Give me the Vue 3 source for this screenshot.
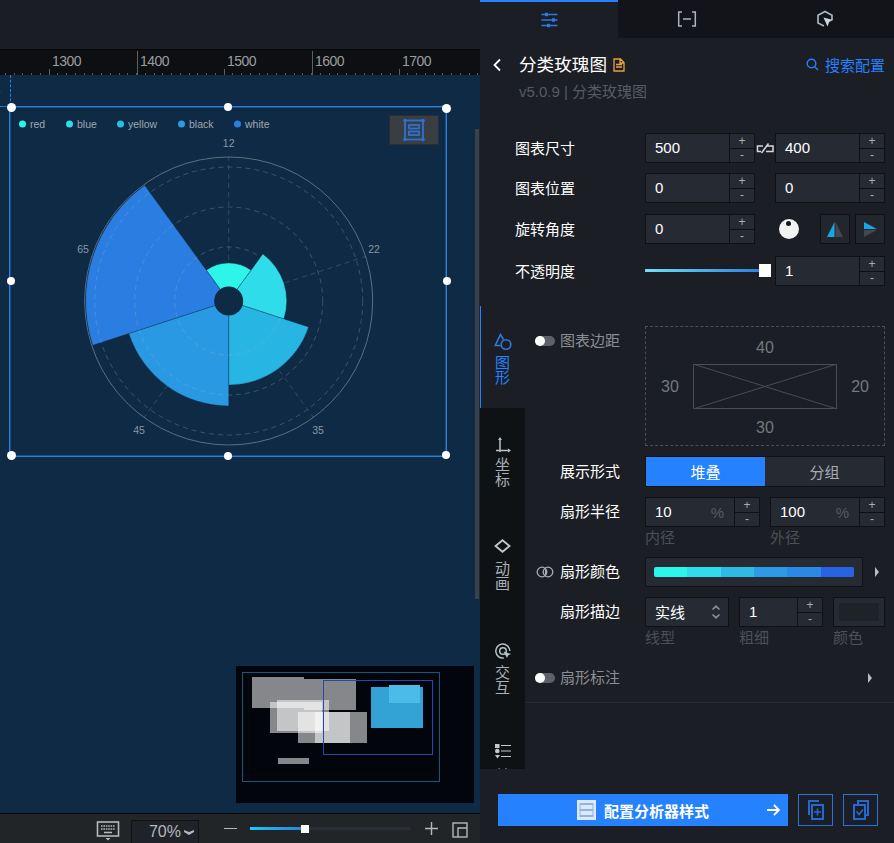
<script setup>
import { computed } from "vue";

const rulerLabels = [
	{ text: "1300", x: 49, tall: false },
	{ text: "1400", x: 137, tall: true },
	{ text: "1500", x: 224, tall: false },
	{ text: "1600", x: 312, tall: true },
	{ text: "1700", x: 399, tall: false }
];

// 小刻度，每 10 个单位一格
const minorTicks = computed(() => {
	const list = [];
	for (let x = -4; x < 480; x += 8.75) list.push(Math.round(x));
	return list;
});

const legend = [
	{ name: "red", color: "#2df5ea", x: 22 },
	{ name: "blue", color: "#2fdcea", x: 69 },
	{ name: "yellow", color: "#2dbbe6", x: 120 },
	{ name: "black", color: "#2c9ae4", x: 181 },
	{ name: "white", color: "#2a7de1", x: 237 }
];

const cx = 219.7;
const cy = 195;

const polar = (r, deg) => {
	const a = ((deg - 90) * Math.PI) / 180;
	return [cx + r * Math.cos(a), cy + r * Math.sin(a)];
};

// 玫瑰图扇区
const sectors = computed(() => {
	const data = [
		{ r: 38, color: "#2df5ea", start: -36 },
		{ r: 58, color: "#2fdcea", start: 36 },
		{ r: 84, color: "#27b5e3", start: 108 },
		{ r: 105, color: "#2a99e3", start: 180 },
		{ r: 143, color: "#2a7de1", start: 252 }
	];
	return data.map(item => {
		const [x1, y1] = polar(item.r, item.start);
		const [x2, y2] = polar(item.r, item.start + 72);
		return {
			color: item.color,
			d: `M${cx} ${cy}L${x1} ${y1}A${item.r} ${item.r} 0 0 1 ${x2} ${y2}Z`
		};
	});
});

const spokes = computed(() =>
	[0, 72, 144, 216, 288].map(deg => {
		const [x1, y1] = polar(14, deg);
		const [x2, y2] = polar(144, deg);
		return { x1, y1, x2, y2 };
	})
);

const chartLabels = [
	{ text: "12", x: 219.7, y: 41 },
	{ text: "22", x: 365, y: 147 },
	{ text: "35", x: 309, y: 328 },
	{ text: "45", x: 130, y: 328 },
	{ text: "65", x: 74, y: 147 }
];

const handles = [
	{ x: 1, y: 0, r: 9 },
	{ x: 218, y: 0, r: 8 },
	{ x: 436, y: 1, r: 9 },
	{ x: 1, y: 174, r: 8 },
	{ x: 437, y: 174, r: 8 },
	{ x: 1, y: 348, r: 9 },
	{ x: 218, y: 349, r: 8 },
	{ x: 436, y: 348, r: 8 }
];

const miniRects = [
	{ x: 16, y: 11, w: 52, h: 31 },
	{ x: 68, y: 13, w: 52, h: 31 },
	{ x: 34, y: 36, w: 52, h: 31 },
	{ x: 41, y: 34, w: 52, h: 31 },
	{ x: 62, y: 46, w: 52, h: 31 },
	{ x: 79, y: 46, w: 52, h: 31 },
	{ x: 42, y: 92, w: 31, h: 6 }
];
</script>

<template>
	<div class="page">
		<!-- 画布区域 -->
		<div class="stage">
			<div class="top-bar"></div>
			<div class="ruler">
				<span v-for="x in minorTicks" :key="x" class="tick" :style="{ left: x + 'px' }"></span>
				<template v-for="item in rulerLabels" :key="item.text">
					<span class="tick-major" :class="{ tall: item.tall }" :style="{ left: item.x + 'px' }"></span>
					<span class="ruler-label" :style="{ left: item.x + 3 + 'px' }">{{ item.text }}</span>
				</template>
			</div>
			<div class="canvas">
				<span class="guide-v"></span>
				<span class="guide-h"></span>
				<span class="guide-num">4</span>
				<span class="scrollbar"></span>

				<div class="node">
					<svg class="chart" width="438" height="352" viewBox="0 0 438 352">
						<g v-for="item in legend" :key="item.name">
							<circle :cx="item.x - 8.5" cy="18" r="3.5" :fill="item.color" />
							<text :x="item.x - 1" y="22" class="legend-text">{{ item.name }}</text>
						</g>
						<circle :cx="cx" :cy="cy" r="144" fill="none" stroke="#5b6f80" stroke-width="1" />
						<g stroke="#9fb4c4" stroke-opacity="0.24" stroke-width="1" stroke-dasharray="5 4">
							<line v-for="(s, i) in spokes" :key="i" :x1="s.x1" :y1="s.y1" :x2="s.x2" :y2="s.y2" />
						</g>
						<path v-for="item in sectors" :key="item.color" :d="item.d" :fill="item.color" stroke="#0e2a44" stroke-opacity="0.55" stroke-width="0.6" />
						<g fill="none" stroke="#9fb4c4" stroke-opacity="0.3" stroke-width="1" stroke-dasharray="5 4">
							<circle :cx="cx" :cy="cy" r="134" />
							<circle :cx="cx" :cy="cy" r="94" />
							<circle :cx="cx" :cy="cy" r="54" />
						</g>
						<circle :cx="cx" :cy="cy" r="14.5" fill="#0e2a44" />
						<text v-for="item in chartLabels" :key="item.text" :x="item.x" :y="item.y" class="chart-label">{{ item.text }}</text>
					</svg>
					<span v-for="(h, i) in handles" :key="i" class="handle" :style="{ left: h.x - h.r / 2 + 'px', top: h.y - h.r / 2 + 'px', width: h.r + 'px', height: h.r + 'px' }"></span>
					<div class="node-btn">
						<svg width="24" height="24" viewBox="0 0 24 24" fill="none" stroke="#2a72d8" stroke-width="1.8">
							<rect x="3" y="2.5" width="18" height="19" />
							<rect x="7" y="7" width="10" height="3.5" />
							<rect x="7" y="13.5" width="10" height="3.5" />
							<g fill="#2a72d8" stroke="none">
								<circle cx="3" cy="2.5" r="1.8" />
								<circle cx="21" cy="2.5" r="1.8" />
								<circle cx="3" cy="21.5" r="1.8" />
								<circle cx="21" cy="21.5" r="1.8" />
							</g>
						</svg>
					</div>
				</div>

				<!-- 缩略图 -->
				<div class="minimap">
					<span class="mini-frame"></span>
					<span v-for="(r, i) in miniRects" :key="i" class="mini-rect" :style="{ left: r.x + 'px', top: r.y + 'px', width: r.w + 'px', height: r.h + 'px' }"></span>
					<span class="mini-blue"></span>
					<span class="mini-blue light"></span>
					<span class="mini-view"></span>
				</div>
			</div>
			<div class="bottom-bar">
				<svg class="kbd" width="24" height="20" viewBox="0 0 24 20" fill="none" stroke="#b4b8bc">
					<rect x="1.5" y="1" width="21" height="14" stroke-width="1.6" />
					<path d="M5 5h14M5 8h14" stroke-width="1.6" stroke-dasharray="1.6 .8" />
					<path d="M8 11.500h8" stroke-width="1.6" />
					<path d="M9.500 17h5l-2.500 2.500z" fill="#b4b8bc" stroke="none" />
				</svg>
				<div class="zoom-box">70%<svg width="10" height="6" viewBox="0 0 10 6"><path d="M0 1l5 2 5-2v2L5 6 0 3z" fill="#b4b8bc" /></svg></div>
				<span class="zoom-minus"></span>
				<div class="zoom-track">
					<span class="zoom-fill"></span>
					<span class="zoom-thumb"></span>
				</div>
				<svg class="zoom-plus" width="13" height="13" viewBox="0 0 13 13"><path d="M0 6.500h13M6.500 0v13" stroke="#b4b8bc" stroke-width="1.4" /></svg>
				<svg class="fit" width="16" height="16" viewBox="0 0 16 16" fill="none" stroke="#b4b8bc" stroke-width="1.4"><rect x="1" y="1" width="14" height="14" /><path d="M15 6H6v9" /></svg>
			</div>
		</div>

		<!-- 右侧配置面板 -->
		<div class="panel">
			<div class="panel-tabs">
				<div class="panel-tab active">
					<svg width="17" height="16" viewBox="0 0 17 16" stroke="#2a7be0" stroke-width="1.500" fill="#2a7be0">
						<path d="M.5 2.500h16M.5 8h16M.5 13.500h16" fill="none" />
						<rect x="4" y=".8" width="3" height="3.400" stroke="none" />
						<rect x="11" y="6.300" width="3" height="3.400" stroke="none" />
						<rect x="6" y="11.800" width="3" height="3.400" stroke="none" />
					</svg>
				</div>
				<div class="panel-tab">
					<svg width="20" height="16" viewBox="0 0 20 16" fill="none" stroke="#a9b4bb" stroke-width="1.500">
						<path d="M5 1H1.700v14H5M15 1h3.300v14H15M6 8h8" />
					</svg>
				</div>
				<div class="panel-tab">
					<svg width="18" height="18" viewBox="0 0 18 18" fill="none" stroke="#a9b4bb" stroke-width="1.700">
						<path d="M8 16l-6-3V5.200L9 1.500l7 3.700V10" />
						<path d="M7.500 7.500l9.500 2.500-3.800 2-1.700 4.500z" fill="#c8d6e2" stroke="none" />
					</svg>
				</div>
			</div>

			<div class="head">
				<svg class="back" width="10" height="14" viewBox="0 0 10 14" fill="none" stroke="#fff" stroke-width="1.800"><path d="M8 1.500L2.500 7 8 12.500" /></svg>
				<div class="head-main">
					<div class="title-line">
						<span class="title">分类玫瑰图</span>
						<svg width="12" height="14" viewBox="0 0 12 14" fill="none" stroke="#e8a33a" stroke-width="1.300"><path d="M1 1h6.500L11 4.500V13H1zM3 6.500h6M3 9h6M7 1v4h4" /></svg>
					</div>
					<div class="version">v5.0.9 | 分类玫瑰图</div>
				</div>
				<div class="search">
					<svg width="13" height="13" viewBox="0 0 13 13" fill="none" stroke="#2681ff" stroke-width="1.400"><circle cx="5.500" cy="5.500" r="4.300" /><path d="M8.700 8.700L12 12" /></svg>
					搜索配置
				</div>
			</div>

			<div class="base">
				<div class="row">
					<label class="lab">图表尺寸</label>
					<div class="num w110"><span class="val">500</span><div class="steps"><i>+</i><i>-</i></div></div>
					<svg class="link" width="20" height="11" viewBox="0 0 20 11" fill="none" stroke="#d5d8da" stroke-width="1.500"><path d="M8 3H2.500v5.500h3.500M12 3h6v5.500h-7M6.500 10l7-9.500" /></svg>
					<div class="num w110"><span class="val">400</span><div class="steps"><i>+</i><i>-</i></div></div>
				</div>
				<div class="row">
					<label class="lab">图表位置</label>
					<div class="num w110"><span class="val">0</span><div class="steps"><i>+</i><i>-</i></div></div>
					<span class="spacer"></span>
					<div class="num w110"><span class="val">0</span><div class="steps"><i>+</i><i>-</i></div></div>
				</div>
				<div class="row rot">
					<label class="lab">旋转角度</label>
					<div class="num w110"><span class="val">0</span><div class="steps"><i>+</i><i>-</i></div></div>
					<span class="dial"><span></span></span>
					<div class="flip">
						<svg width="16" height="15" viewBox="0 0 16 15"><path d="M7.500 0v15H0z" fill="#14a6e6" /><path d="M8.500 0v15H16z" fill="#44484d" /></svg>
					</div>
					<div class="flip">
						<svg width="13" height="15" viewBox="0 0 13 15"><path d="M0 0l13 7H0z" fill="#14a6e6" /><path d="M0 8h13L0 15z" fill="#44484d" /></svg>
					</div>
				</div>
				<div class="row opa">
					<label class="lab">不透明度</label>
					<div class="slider"><span class="slider-fill"></span><span class="slider-thumb"></span></div>
					<div class="num w110"><span class="val">1</span><div class="steps"><i>+</i><i>-</i></div></div>
				</div>
			</div>

			<div class="section">
				<div class="side">
					<div class="side-tab active">
						<svg width="18" height="18" viewBox="0 0 18 18" fill="none" stroke="#2a7be0" stroke-width="1.600"><path d="M9.500 6.500L6.500 1.500 1.300 12.500H6.500" /><circle cx="12" cy="11.500" r="4.800" /></svg>
						<span class="side-text">图形</span>
					</div>
					<div class="side-tab t2">
						<svg width="16" height="16" viewBox="0 0 16 16" fill="none" stroke="#b7c2c7" stroke-width="1.500"><path d="M5 1.500V15M1 13.500h13.500" /><path d="M5 0L3 3h4zM16 13.500L13 11.500v4z" fill="#b7c2c7" stroke="none" /></svg>
						<span class="side-text">坐标</span>
					</div>
					<div class="side-tab t3">
						<svg width="17" height="14" viewBox="0 0 17 14" fill="none" stroke="#c4c8cb" stroke-width="1.800"><path d="M8.500 1.200L15.500 7 8.500 12.800 1.500 7z" /></svg>
						<span class="side-text">动画</span>
					</div>
					<div class="side-tab t4">
						<svg width="16" height="16" viewBox="0 0 16 16" fill="none" stroke="#b7c2c7" stroke-width="1.500"><path d="M14.800 8a7 7 0 1 0-6 7" /><circle cx="8" cy="8" r="3.300" /><path d="M8.500 8.500L16 11l-2.800 1.200L12 15z" fill="#b7c2c7" stroke="none" /></svg>
						<span class="side-text">交互</span>
					</div>
					<div class="side-tab t5">
						<svg width="16" height="16" viewBox="0 0 16 16" fill="#c4c8cb"><rect x="0" y="1" width="4.500" height="4" /><circle cx="2.300" cy="8" r="2.300" /><path d="M0 12h5l-2.500 3.500z" /><path d="M6 2.500h10M6 8h10M6 13.500h10" stroke="#c4c8cb" stroke-width="1.200" /></svg>
						<span class="side-text">其他</span>
					</div>
				</div>

				<div class="form">
					<div class="frow margin-row">
						<span class="toggle"></span>
						<label class="flab dim">图表边距</label>
						<div class="margin-box">
							<span class="m-top">40</span>
							<div class="m-mid">
								<span>30</span>
								<svg width="144" height="45" viewBox="0 0 144 45" fill="none" stroke="#4a4d52"><rect x="0.500" y="0.500" width="143" height="44" /><path d="M0 0l144 45M144 0L0 45" /></svg>
								<span>20</span>
							</div>
							<span class="m-bot">30</span>
						</div>
					</div>
					<div class="frow show-row">
						<span class="lead"></span>
						<label class="flab">展示形式</label>
						<div class="seg">
							<span class="on">堆叠</span>
							<span>分组</span>
						</div>
					</div>
					<div class="frow radius-row">
						<span class="lead"></span>
						<label class="flab">扇形半径</label>
						<div class="num w115"><span class="val">10</span><em>%</em><div class="steps"><i>+</i><i>-</i></div></div>
						<div class="num w115 gap10"><span class="val">100</span><em>%</em><div class="steps"><i>+</i><i>-</i></div></div>
					</div>
					<div class="hints h1"><span class="hint w125">内径</span><span class="hint">外径</span></div>
					<div class="frow color-row">
						<svg class="lead-ic" width="18" height="12" viewBox="0 0 18 12" fill="none" stroke="#a9adb1" stroke-width="1.300"><circle cx="6" cy="6" r="4.800" /><circle cx="12" cy="6" r="4.800" /><path d="M9 2.500a4.800 4.800 0 0 1 0 7z" fill="#a9adb1" stroke="none" /></svg>
						<label class="flab">扇形颜色</label>
						<div class="color-field"><div class="color-bar"></div></div>
						<svg class="arrow" width="6" height="10" viewBox="0 0 6 10"><path d="M1 0l4 5-4 5z" fill="#b9bdc0" /></svg>
					</div>
					<div class="frow stroke-row">
						<span class="lead"></span>
						<label class="flab">扇形描边</label>
						<div class="num select"><span class="val cn">实线</span>
							<svg width="10" height="16" viewBox="0 0 10 16"><path d="M5 1l4 4-1 1-3-2.500L2 6 1 5zM5 15l4-4-1-1-3 2.500L2 10l-1 1z" fill="#8c9095" /></svg>
						</div>
						<div class="num w84"><span class="val">1</span><div class="steps"><i>+</i><i>-</i></div></div>
						<div class="swatch"><span></span></div>
					</div>
					<div class="hints h2"><span class="hint w94">线型</span><span class="hint w94">粗细</span><span class="hint">颜色</span></div>
					<div class="frow note-row">
						<span class="toggle"></span>
						<label class="flab dim">扇形标注</label>
						<svg class="arrow push" width="6" height="10" viewBox="0 0 6 10"><path d="M1 0l4 5-4 5z" fill="#b9bdc0" /></svg>
					</div>
					<div class="divider"></div>
				</div>
			</div>

			<div class="foot">
				<div class="main-btn">
					<svg width="19" height="20" viewBox="0 0 19 20"><rect width="19" height="20" fill="#dfe9f5" /><rect x="2.500" y="3" width="14" height="14" fill="#8db4e8" /><rect x="3.500" y="5" width="12" height="4" fill="#dfe9f5" /><rect x="3.500" y="11" width="12" height="4" fill="#dfe9f5" /></svg>
					<span>配置分析器样式</span>
					<svg class="go" width="13" height="12" viewBox="0 0 13 12" fill="none" stroke="#fff" stroke-width="1.800"><path d="M0 6h11.500M7 1l5 5-5 5" /></svg>
				</div>
				<div class="icon-btn">
					<svg width="16" height="20" viewBox="0 0 16 20" fill="none" stroke="#2568d0" stroke-width="2"><path d="M11 1H1v14" /><rect x="4" y="5" width="11" height="14" /><path d="M9.500 8.500v7M6 12h7" stroke-width="1.600" /></svg>
				</div>
				<div class="icon-btn">
					<svg width="16" height="20" viewBox="0 0 16 20" fill="none" stroke="#2568d0" stroke-width="2"><path d="M5 4V1h10v14h-3" /><rect x="1" y="5" width="11" height="14" /><path d="M3.500 11.500l2.500 3 4-5" stroke-width="1.600" /></svg>
				</div>
			</div>
		</div>
	</div>
</template>

<style>
	html,
	body {
		margin: 0;
		background: #1b1e25;
	}
</style>

<style scoped>
	.page {
		display: flex;
		width: 894px;
		height: 843px;
		overflow: hidden;
		font-family: "Liberation Sans", "Noto Sans CJK SC", sans-serif;
		color: #fff;
	}

	/* 画布 */
	.stage {
		display: flex;
		flex-direction: column;
		width: 480px;
		flex: none;
	}
	.top-bar {
		height: 49px;
		background: #1a1d23;
		border-bottom: 1px solid #050607;
	}
	.ruler {
		position: relative;
		height: 25px;
		background: #0e0f12;
		overflow: hidden;
	}
	.tick {
		position: absolute;
		bottom: 0;
		width: 1px;
		height: 2px;
		background: #55585c;
	}
	.tick-major {
		position: absolute;
		bottom: 0;
		width: 1px;
		height: 6px;
		background: #5c5f63;
	}
	.tick-major.tall {
		height: 24px;
	}
	.ruler-label {
		position: absolute;
		top: 3px;
		font-size: 14px;
		letter-spacing: -0.5px;
		color: #9a9da0;
	}
	.canvas {
		position: relative;
		height: 738px;
		background: #0e2a44;
		overflow: hidden;
	}
	.guide-v {
		position: absolute;
		left: 10px;
		top: 0;
		height: 31px;
		border-left: 1px dashed #2a7de1;
	}
	.guide-h {
		position: absolute;
		left: 0;
		top: 31px;
		width: 10px;
		border-top: 1px dashed #2a7de1;
	}
	.guide-num {
		position: absolute;
		left: -6px;
		top: 8px;
		font-size: 12px;
		color: #2a6fc0;
	}
	.scrollbar {
		position: absolute;
		left: 475px;
		top: 54px;
		width: 4px;
		height: 470px;
		background: #3c4148;
	}
	.node {
		position: absolute;
		left: 9px;
		top: 31px;
		width: 438px;
		height: 351px;
		border: 1px solid #2a7de1;
		box-sizing: border-box;
		outline: 1px solid rgba(42, 125, 225, 0.45);
		outline-offset: -2px;
	}
	.chart {
		position: absolute;
		left: -1px;
		top: -1px;
	}
	.legend-text {
		font-size: 10.5px;
		fill: #9fa9b3;
	}
	.chart-label {
		font-size: 10.5px;
		fill: #8b97a2;
		text-anchor: middle;
	}
	.handle {
		position: absolute;
		background: #fff;
		border-radius: 50%;
	}
	.node-btn {
		position: absolute;
		left: 379px;
		top: 8px;
		width: 50px;
		height: 30px;
		display: flex;
		align-items: center;
		justify-content: center;
		background: #3a3d42;
		border: 1px solid #2a2d30;
		box-sizing: border-box;
	}

	/* 缩略图 */
	.minimap {
		position: absolute;
		left: 236px;
		top: 591px;
		width: 238px;
		height: 137px;
		background: #02060c;
	}
	.mini-frame {
		position: absolute;
		left: 6px;
		top: 6px;
		width: 198px;
		height: 110px;
		border: 1px solid #0e5a7a;
		box-sizing: border-box;
	}
	.mini-rect {
		position: absolute;
		background: rgba(255, 255, 255, 0.52);
	}
	.mini-blue {
		position: absolute;
		left: 135px;
		top: 21px;
		width: 52px;
		height: 41px;
		background: #33a3d6;
	}
	.mini-blue.light {
		left: 153px;
		top: 19px;
		width: 31px;
		height: 18px;
		background: #4bbbe9;
	}
	.mini-view {
		position: absolute;
		left: 87px;
		top: 14px;
		width: 110px;
		height: 75px;
		border: 1px solid #2448b0;
		box-sizing: border-box;
	}

	/* 底栏 */
	.bottom-bar {
		position: relative;
		display: flex;
		align-items: center;
		height: 29px;
		border-top: 1px solid #050607;
		background: #222528;
	}
	.kbd {
		margin-left: 96px;
		margin-top: 5px;
	}
	.zoom-box {
		display: flex;
		align-items: center;
		justify-content: flex-end;
		gap: 3px;
		box-sizing: border-box;
		width: 68px;
		height: 23px;
		margin-left: 11px;
		margin-top: 6px;
		padding-right: 4px;
		font-size: 16px;
		color: #b4b8bc;
		background: #1f2329;
		border: 1px solid #101216;
		border-bottom: 0;
	}
	.zoom-minus {
		width: 13px;
		height: 1.500px;
		margin-left: 25px;
		background: #b4b8bc;
	}
	.zoom-track {
		position: relative;
		width: 160px;
		height: 3px;
		margin-left: 13px;
		background: #2a2e36;
	}
	.zoom-fill {
		position: absolute;
		left: 0;
		top: 0;
		width: 55px;
		height: 3px;
		background: linear-gradient(90deg, #1fc8f0, #2a7de1);
	}
	.zoom-thumb {
		position: absolute;
		left: 51px;
		top: -2px;
		width: 8px;
		height: 8px;
		background: #fff;
	}
	.zoom-plus {
		margin-left: 15px;
	}
	.fit {
		margin-top: 3px;
		margin-left: 14px;
	}

	/* 面板 */
	.panel {
		display: flex;
		flex-direction: column;
		width: 414px;
		flex: none;
		background: #1b1e25;
	}
	.panel-tabs {
		display: flex;
		height: 38px;
		background: #121419;
	}
	.panel-tab {
		flex: 1;
		display: flex;
		align-items: center;
		justify-content: center;
	}
	.panel-tab.active {
		flex: none;
		width: 138px;
		box-sizing: border-box;
		background: #1b1e25;
		border-top: 2px solid #2681ff;
		padding-bottom: 1px;
	}
	.head {
		display: flex;
		align-items: flex-start;
		height: 95px;
		padding: 16px 9px 0 12px;
		box-sizing: border-box;
	}
	.back {
		margin-top: 4px;
		margin-right: 17px;
	}
	.head-main {
		flex: 1;
	}
	.title-line {
		display: flex;
		align-items: center;
		gap: 6px;
		height: 22px;
	}
	.title {
		font-size: 17.600px;
		line-height: 22px;
	}
	.version {
		margin-top: 6px;
		font-size: 15px;
		line-height: 20px;
		color: #565b62;
	}
	.search {
		display: flex;
		align-items: center;
		gap: 6px;
		height: 22px;
		margin-top: -1px;
		font-size: 15px;
		color: #2681ff;
	}
	.base {
		display: flex;
		flex-direction: column;
		gap: 10px;
		padding-left: 35px;
	}
	.row {
		display: flex;
		align-items: center;
		height: 30px;
	}
	.row.rot {
		margin-top: 1px;
	}
	.row.opa {
		margin-top: 2px;
	}
	.lab {
		width: 130px;
		margin-top: -2px;
		font-size: 15px;
	}
	.num {
		display: flex;
		align-items: center;
		box-sizing: border-box;
		height: 30px;
		background: #262b33;
		border: 1px solid #0e1014;
		position: relative;
	}
	.w110 {
		width: 110px;
	}
	.w115 {
		width: 115px;
	}
	.w84 {
		width: 84px;
		margin-left: 10px;
	}
	.gap10 {
		margin-left: 10px;
	}
	.val {
		flex: 1;
		margin-top: -1px;
		padding-left: 9px;
		font-size: 15px;
		color: #fff;
	}
	.num em {
		font-style: normal;
		font-size: 15px;
		color: #555a60;
		margin-right: 10px;
	}
	.steps {
		display: flex;
		flex-direction: column;
		width: 24px;
		height: 100%;
		border-left: 1px solid #0e1014;
	}
	.steps i {
		flex: 1;
		display: flex;
		align-items: center;
		justify-content: center;
		font-style: normal;
		font-size: 12px;
		line-height: 1;
		color: #a9adb1;
	}
	.steps i:first-child {
		border-bottom: 1px solid #0e1014;
	}
	.link {
		width: 20px;
		flex: none;
	}
	.spacer {
		width: 20px;
	}
	.dial {
		position: relative;
		width: 20px;
		height: 20px;
		margin-left: 24px;
		border-radius: 50%;
		background: #f2f2f2;
	}
	.dial span {
		position: absolute;
		left: 7px;
		top: 2px;
		width: 5px;
		height: 5px;
		border-radius: 50%;
		background: #15171c;
	}
	.flip {
		display: flex;
		align-items: center;
		justify-content: center;
		box-sizing: border-box;
		width: 30px;
		height: 30px;
		margin-left: 21px;
		background: #22262d;
		border: 1px solid #0e1014;
	}
	.flip + .flip {
		margin-left: 5px;
	}
	.slider {
		position: relative;
		width: 130px;
		height: 30px;
		flex: none;
		margin-right: 0;
	}
	.slider-fill {
		position: absolute;
		left: 0;
		top: 13px;
		width: 118px;
		height: 3px;
		background: linear-gradient(90deg, #6fe0f4, #2a7de1);
	}
	.slider-thumb {
		position: absolute;
		left: 114px;
		top: 8px;
		width: 12px;
		height: 13px;
		background: #fff;
	}
	.section {
		display: flex;
		height: 463px;
		margin-top: 20px;
		overflow: hidden;
	}
	.side {
		width: 45px;
		flex: none;
		height: 463px;
		overflow: hidden;
		background: #0f1215;
		display: flex;
		flex-direction: column;
	}
	.side-tab {
		display: flex;
		flex-direction: column;
		align-items: center;
		flex: none;
		color: #a9b1b6;
	}
	.side-tab svg {
		flex: none;
	}
	.side-tab.active {
		height: 102px;
		box-sizing: border-box;
		padding-top: 27px;
		color: #2681ff;
		background: #1b1e25;
		border-left: 1px solid #2681ff;
		padding-right: 1px;
	}
	.side-tab.t2 {
		height: 102px;
		padding-top: 29px;
		box-sizing: border-box;
	}
	.side-tab.t3 {
		height: 103px;
		padding-top: 29px;
		box-sizing: border-box;
	}
	.side-tab.t3 .side-text {
		margin-top: 8px;
	}
	.side-tab.t4 {
		height: 102px;
		padding-top: 30px;
		box-sizing: border-box;
	}
	.side-tab.t4 .side-text {
		margin-top: 6px;
	}
	.side-tab.t5 {
		height: 54px;
		padding-top: 28px;
		box-sizing: border-box;
		overflow: hidden;
	}
	.side-tab.t5 .side-text {
		margin-top: 9px;
	}
	.side-text {
		width: 15px;
		margin-top: 4px;
		font-size: 15px;
		line-height: 15px;
		text-align: center;
	}
	.form {
		flex: 1;
		padding: 20px 9px 0 10px;
		min-width: 0;
	}
	.frow {
		display: flex;
		align-items: center;
	}
	.toggle {
		position: relative;
		width: 20px;
		height: 10px;
		flex: none;
		border-radius: 5px;
		background: #5e6268;
	}
	.toggle::before {
		content: "";
		position: absolute;
		left: 0;
		top: 0;
		width: 10px;
		height: 10px;
		border-radius: 50%;
		background: #fff;
	}
	.lead {
		width: 20px;
		flex: none;
	}
	.lead-ic {
		width: 20px;
		flex: none;
	}
	.flab {
		width: 90px;
		flex: none;
		margin-top: -3px;
		padding-left: 5px;
		box-sizing: border-box;
		font-size: 15px;
		white-space: nowrap;
	}
	.flab.dim {
		color: #8a8e93;
	}
	.margin-row {
		align-items: flex-start;
		height: 120px;
	}
	.margin-row .toggle {
		margin-top: 10px;
	}
	.margin-row .flab {
		margin-top: 0;
		line-height: 30px;
	}
	.margin-box {
		display: flex;
		flex-direction: column;
		align-items: center;
		box-sizing: border-box;
		width: 240px;
		height: 120px;
		border: 1px dashed #4a4d52;
		font-size: 16px;
		color: #74787d;
	}
	.m-top {
		margin-top: 12px;
		line-height: 18px;
	}
	.m-mid {
		display: flex;
		align-items: center;
		justify-content: space-between;
		width: 100%;
		box-sizing: border-box;
		margin-top: 7px;
		padding: 0 15px;
		height: 45px;
	}
	.m-bot {
		margin-top: 10px;
		line-height: 18px;
	}
	.show-row {
		margin-top: 10px;
		height: 31px;
	}
	.seg {
		display: flex;
		box-sizing: border-box;
		width: 240px;
		height: 31px;
		background: #262b33;
		border: 1px solid #0e1014;
		font-size: 15px;
		color: #a9adb1;
	}
	.seg span {
		flex: 1;
		display: flex;
		align-items: center;
		justify-content: center;
	}
	.seg .on {
		background: #2681ff;
		color: #fff;
	}
	.radius-row {
		margin-top: 10px;
		height: 30px;
	}
	.hints {
		display: flex;
		padding-left: 110px;
		height: 20px;
		font-size: 15px;
		line-height: 22px;
		color: #4c5056;
	}
	.hint {
		flex: none;
	}
	.w125 {
		width: 125px;
	}
	.w94 {
		width: 94px;
	}
	.color-row {
		margin-top: 10px;
		height: 30px;
	}
	.color-field {
		display: flex;
		align-items: center;
		justify-content: center;
		box-sizing: border-box;
		width: 218px;
		height: 30px;
		background: #262b33;
		border: 1px solid #0e1014;
	}
	.color-bar {
		width: 200px;
		height: 10px;
		border-radius: 2px;
		background: linear-gradient(90deg, #2df5ea 0 16.600%, #2fdcea 16.600% 33.300%, #2dbbe6 33.300% 50%, #2c9ae4 50% 66.600%, #2a88e6 66.600% 83.300%, #2a62e4 83.300% 100%);
	}
	.arrow {
		flex: none;
		margin-left: 11px;
	}
	.arrow.push {
		margin-left: auto;
		margin-right: 12px;
	}
	.stroke-row {
		margin-top: 10px;
		height: 30px;
	}
	.select {
		width: 84px;
		padding-right: 7px;
	}
	.swatch {
		display: flex;
		align-items: center;
		justify-content: center;
		box-sizing: border-box;
		width: 52px;
		height: 30px;
		margin-left: 10px;
		background: #262b33;
		border: 1px solid #0e1014;
	}
	.swatch span {
		width: 40px;
		height: 18px;
		background: #1f2327;
	}
	.note-row {
		margin-top: 16px;
		height: 30px;
	}
	.divider {
		height: 1px;
		margin: 9px -9px 0 -10px;
		background: #272a30;
	}
	.foot {
		display: flex;
		align-items: center;
		gap: 10px;
		padding: 25px 0 0 18px;
	}
	.main-btn {
		position: relative;
		display: flex;
		align-items: center;
		justify-content: center;
		gap: 8px;
		box-sizing: border-box;
		width: 290px;
		height: 32px;
		background: #2681ff;
		font-size: 15px;
		font-weight: 700;
	}
	.go {
		position: absolute;
		right: 8px;
		top: 10px;
	}
	.icon-btn {
		display: flex;
		align-items: center;
		justify-content: center;
		box-sizing: border-box;
		width: 35px;
		height: 32px;
		border: 1px solid #2a72d8;
	}
</style>
